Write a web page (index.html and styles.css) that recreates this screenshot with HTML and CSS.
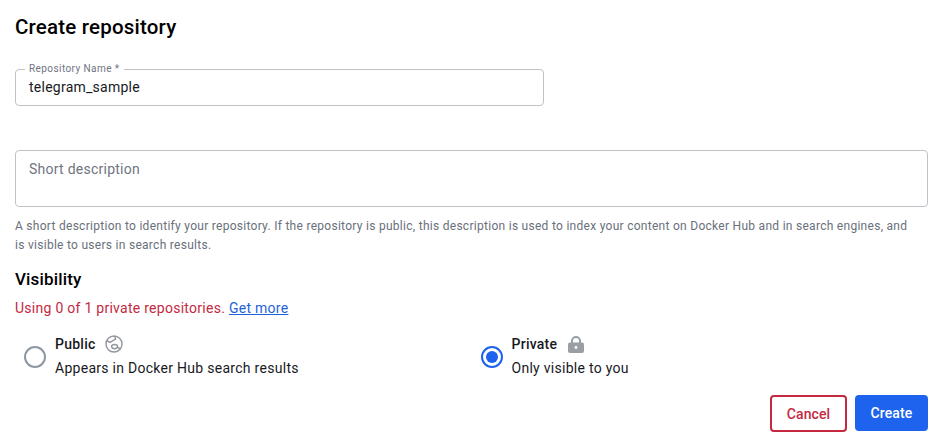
FILE: index.html
```html
<!DOCTYPE html>
<html lang="en">
<head>
<meta charset="utf-8">
<title>Create repository</title>
<link rel="stylesheet" href="styles.css">
</head>
<body>
<main class="page">
  <h1 class="title">Create repository</h1>
  <div class="name-field">
    <span class="float-label">Repository Name *</span>
    <div class="name-value">telegram_sample</div>
  </div>
  <div class="desc-field">Short description</div>
  <p class="help">A short description to identify your repository. If the repository is public, this description is used to index your content on Docker Hub and in search engines, and is visible to users in search results.</p>
  <h2 class="subtitle">Visibility</h2>
  <p class="usage">Using 0 of 1 private repositories. <a class="more" href="#">Get more</a></p>
  <div class="options">
    <div class="option">
      <span class="radio"></span>
      <div class="option-text">
        <div class="option-head"><span class="option-name">Public</span>
          <svg class="globe" width="18" height="18" viewBox="0 0 18 18" fill="none" stroke="#92969d" stroke-width="1.4"><circle cx="9" cy="9" r="8"/><path d="M1.8 5.6 L5 7.4 L10.6 4 L9.6 1.2"/><ellipse cx="9.6" cy="11.6" rx="3" ry="2.1"/><path d="M12.4 12.4 L16 14"/></svg>
        </div>
        <div class="option-desc">Appears in Docker Hub search results</div>
      </div>
    </div>
    <div class="option">
      <span class="radio radio-on"></span>
      <div class="option-text">
        <div class="option-head option-head-wide"><span class="option-name">Private</span>
          <svg class="lock" width="16" height="17" viewBox="0 0 16 17"><path fill="none" stroke="#9a9ea5" stroke-width="2" d="M4 8V5a4 4 0 0 1 8 0v3"/><rect x="0" y="6.5" width="16" height="10.5" rx="2" fill="#9a9ea5"/><circle cx="8" cy="11.5" r="1.4" fill="#fff"/></svg>
        </div>
        <div class="option-desc">Only visible to you</div>
      </div>
    </div>
  </div>
  <div class="actions">
    <button class="btn btn-cancel" type="button">Cancel</button>
    <button class="btn btn-create" type="button">Create</button>
  </div>
</main>
</body>
</html>
```
FILE: styles.css
```css
html, body { margin: 0; padding: 0; background: #fff; }
body { font-family: Roboto, "Liberation Sans", sans-serif; color: #17191e; overflow: hidden; }
.page { width: 913px; height: 446px; padding: 0 14px 0 15px; display: flex; flex-direction: column; }
.title { margin: 15px 0 0; font-size: 20.5px; line-height: 24px; font-weight: 500; letter-spacing: 0.2px; color: #000; }
.name-field { position: relative; box-sizing: border-box; width: 529px; height: 37px; margin-top: 30px; border: 1px solid #bfc2c7; border-radius: 4px; padding: 0 13px; }
.float-label { position: absolute; left: 9px; top: -7px; padding: 0 4px; background: #fff; font-size: 10px; line-height: 12px; letter-spacing: 0.42px; color: #6f7581; }
.name-value { font-size: 14px; line-height: 34px; letter-spacing: 0.25px; color: #17191e; }
.desc-field { box-sizing: border-box; width: 913px; height: 57px; margin-top: 44px; border: 1px solid #bfc2c7; border-radius: 4px; padding: 9px 13px; font-size: 14px; line-height: 18px; letter-spacing: 0.25px; color: #6f7581; }
.help { margin: 10px 0 0; max-width: 900px; font-size: 12px; line-height: 19px; letter-spacing: 0.28px; color: #69707b; }
.subtitle { margin: 14px 0 0; font-size: 17px; line-height: 20px; font-weight: 500; letter-spacing: 0.15px; color: #000; }
.usage { margin: 10px 0 0; font-size: 14px; line-height: 18px; letter-spacing: 0.27px; color: #c4293f; }
.more { color: #1f63d8; text-decoration: underline; }
.options { display: flex; margin-top: 17px; padding-left: 9px; }
.option { width: 456.5px; flex: none; display: flex; align-items: center; gap: 9px; }
.radio { box-sizing: border-box; width: 22px; height: 22px; border-radius: 50%; border: 2px solid #8f97a3; flex: none; position: relative; top: 1px; }
.radio-on { border-color: #1d63ed; display: flex; align-items: center; justify-content: center; }
.radio-on::after { content: ""; width: 12px; height: 12px; border-radius: 50%; background: #1d63ed; }
.option-text { display: flex; flex-direction: column; }
.option-head { display: flex; align-items: center; gap: 9px; height: 20px; }
.option-head-wide { gap: 11px; }
.option-name { font-size: 14px; font-weight: 500; letter-spacing: 0.25px; color: #17191e; }
.option-desc { margin-top: 5px; font-size: 14px; line-height: 18px; letter-spacing: 0.28px; color: #17191e; }
.actions { display: flex; justify-content: flex-end; align-items: flex-start; gap: 8px; margin-top: 18px; }
.btn { box-sizing: border-box; height: 37px; border-radius: 4px; font-family: inherit; font-size: 14px; font-weight: 500; letter-spacing: 0.1px; padding: 0; }
.btn-cancel { width: 77px; border: 2px solid #c4293f; background: #fff; color: #c4293f; }
.btn-create { width: 73px; height: 36px; border: 0; background: #1d63ed; color: #fff; }
```
